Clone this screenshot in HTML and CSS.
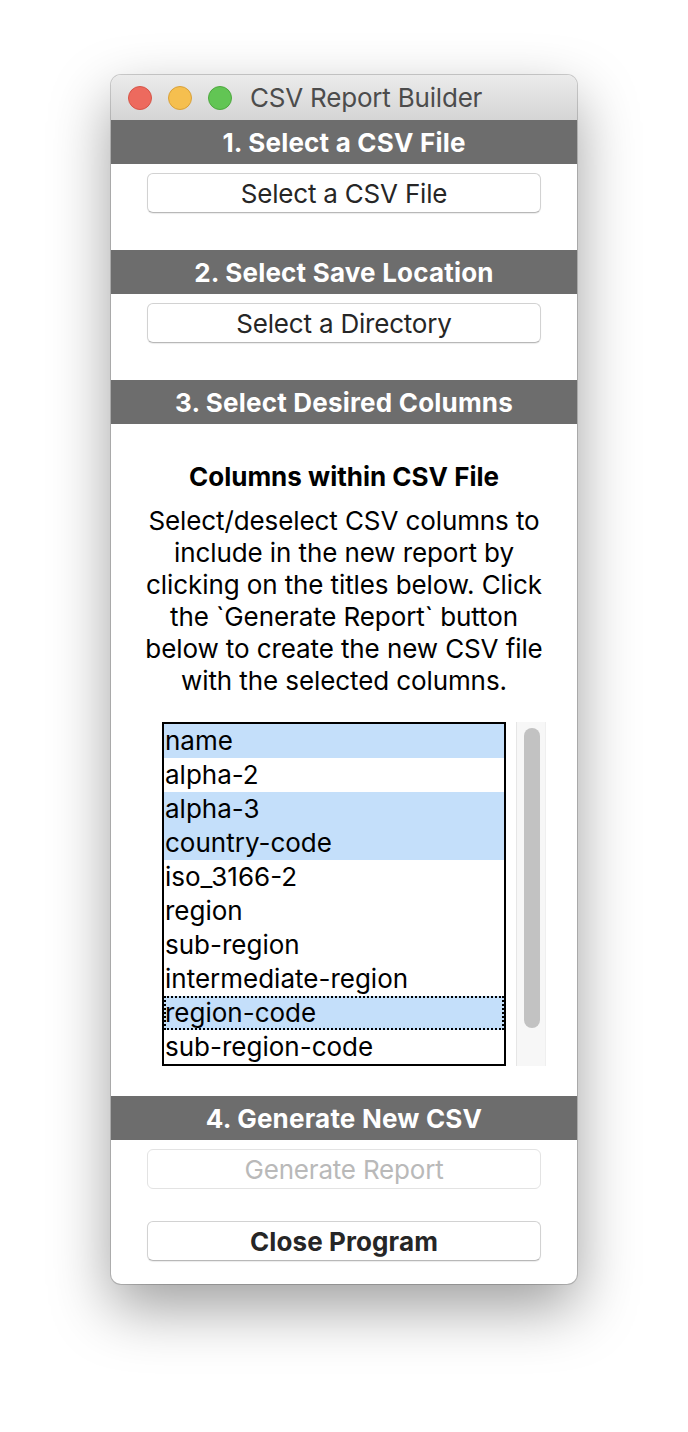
FILE: index.html
```html
<!DOCTYPE html>
<html>
<head>
<meta charset="utf-8">
<title>CSV Report Builder</title>
<link rel="stylesheet" href="styles.css">
</head>
<body>
<div class="window">
  <div class="titlebar">
    <div class="lights">
      <span class="light red"></span>
      <span class="light yellow"></span>
      <span class="light green"></span>
    </div>
    <div class="title">CSV Report Builder</div>
  </div>

  <div class="section-head">1. Select a CSV File</div>
  <div class="section">
    <button class="btn">Select a CSV File</button>
  </div>

  <div class="section-head">2. Select Save Location</div>
  <div class="section">
    <button class="btn">Select a Directory</button>
  </div>

  <div class="section-head">3. Select Desired Columns</div>
  <div class="columns">
    <div class="columns-title">Columns within CSV File</div>
    <p class="columns-desc">Select/deselect CSV columns to<br>include in the new report by<br>clicking on the titles below. Click<br>the `Generate Report` button<br>below to create the new CSV file<br>with the selected columns.</p>
    <div class="list-wrap">
      <ul class="listbox">
        <li class="sel">name</li>
        <li>alpha-2</li>
        <li class="sel">alpha-3</li>
        <li class="sel">country-code</li>
        <li>iso_3166-2</li>
        <li>region</li>
        <li>sub-region</li>
        <li>intermediate-region</li>
        <li class="sel focus">region-code</li>
        <li>sub-region-code</li>
      </ul>
      <div class="scrollbar"><div class="thumb"></div></div>
    </div>
  </div>

  <div class="section-head">4. Generate New CSV</div>
  <div class="section last">
    <button class="btn disabled">Generate Report</button>
    <button class="btn bold">Close Program</button>
  </div>
</div>
</body>
</html>
```

FILE: styles.css
```css
html, body {
  margin: 0;
  padding: 0;
  background: #ffffff;
}
html {
  min-height: 1432px;
}
body {
  min-height: 1432px;
  box-sizing: border-box;
  padding: 75px 0 0 111px;
  font-family: "Inter", "Noto Sans", sans-serif;
}
.window {
  width: 466px;
  height: 1209px;
  background: #ffffff;
  border-radius: 10px;
  overflow: hidden;
  box-shadow: 0 0 0 1px rgba(0,0,0,0.18), 0 24px 60px rgba(0,0,0,0.38);
  display: flex;
  flex-direction: column;
}
.titlebar {
  height: 45px;
  flex: none;
  background: linear-gradient(#ebebeb, #d5d5d5);
  display: flex;
  align-items: center;
  padding-left: 17px;
  box-sizing: border-box;
}
.lights {
  display: flex;
  gap: 16px;
}
.light {
  width: 22px;
  height: 22px;
  border-radius: 50%;
  display: block;
}
.red { background: #ed6a5e; border: 1px solid #d65548; }
.yellow { background: #f5bf4f; border: 1px solid #d9a13a; }
.green { background: #62c554; border: 1px solid #4ea83f; }
.title {
  margin-left: 18px;
  font-size: 26px;
  color: #4c4c4c;
  letter-spacing: -0.2px;
}
.section-head {
  height: 44px;
  flex: none;
  background: #6d6d6d;
  color: #ffffff;
  font-weight: 700;
  font-size: 26px;
  letter-spacing: 0.2px;
  display: flex;
  align-items: center;
  justify-content: center;
}
.section {
  padding: 9px 0 37px 36px;
  display: flex;
  flex-direction: column;
  gap: 32px;
}
.section.last {
  padding-bottom: 0;
}
.btn {
  width: 394px;
  height: 40px;
  box-sizing: border-box;
  background: #ffffff;
  border: 1px solid #d2d2d2;
  border-bottom-color: #b8b8b8;
  border-radius: 6px;
  box-shadow: 0 1px 1px rgba(0,0,0,0.08);
  font-family: "Inter", "Noto Sans", sans-serif;
  font-size: 26px;
  letter-spacing: -0.2px;
  color: #262626;
  padding: 0;
  margin: 0;
}
.btn.disabled {
  color: #b9b9b9;
  border-color: #e3e3e3;
  box-shadow: none;
}
.btn.bold {
  font-weight: 700;
  letter-spacing: 0.1px;
}
.columns {
  padding-top: 37px;
  height: 672px;
  box-sizing: border-box;
  display: flex;
  flex-direction: column;
  align-items: center;
}
.columns-title {
  font-weight: 700;
  font-size: 26px;
  line-height: 32px;
  color: #000;
}
.columns-desc {
  margin: 12px 0 0 0;
  font-size: 26px;
  line-height: 32px;
  text-align: center;
  color: #000;
  white-space: nowrap;
  letter-spacing: -0.1px;
}
.list-wrap {
  margin-top: 25px;
  display: flex;
  gap: 10px;
  align-self: flex-start;
  margin-left: 51px;
}
.listbox {
  list-style: none;
  margin: 0;
  padding: 0;
  width: 344px;
  height: 344px;
  box-sizing: border-box;
  border: 2px solid #000;
  font-size: 26px;
}
.listbox li {
  height: 34px;
  line-height: 34px;
  padding-left: 1px;
  box-sizing: border-box;
  color: #000;
}
.listbox li.sel {
  background: #c4dffa;
}
.listbox li.focus {
  outline: 2px dotted #000;
  outline-offset: -2px;
}
.scrollbar {
  width: 30px;
  height: 344px;
  box-sizing: border-box;
  background: #f7f7f7;
  border-left: 1px solid #e6e6e6;
  border-right: 1px solid #efefef;
  padding: 6px 0 0 7px;
}
.thumb {
  width: 16px;
  height: 300px;
  background: #c2c2c2;
  border-radius: 8px;
}
```
